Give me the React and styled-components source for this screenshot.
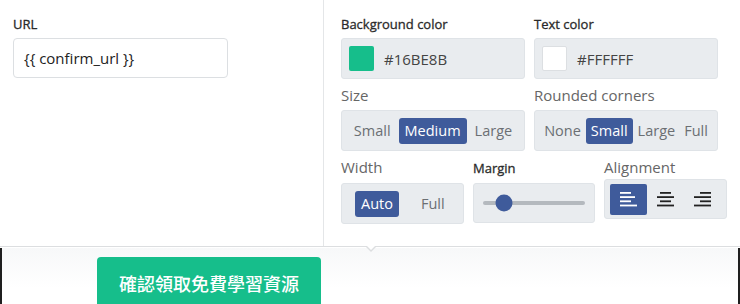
import styled, { createGlobalStyle } from 'styled-components';

const GlobalStyle = createGlobalStyle`
  html, body {
    margin: 0;
    padding: 0;
    background: #fff;
  }
  body {
    font-family: 'Open Sans', 'Noto Sans', 'Noto Sans CJK TC', sans-serif;
    color: #333;
  }
`;

const Page = styled.div`
  width: 740px;
  height: 304px;
  overflow: hidden;
  display: flex;
  flex-direction: column;
`;

const Editor = styled.div`
  display: flex;
  height: 246px;
  flex-shrink: 0;
`;

const LeftPane = styled.div`
  width: 324px;
  border-right: 1px solid #e4e6e8;
  padding: 15px 13px 0;
  box-sizing: border-box;
`;

const RightPane = styled.div`
  flex: 1;
  padding: 15px 12px 0 17px;
  display: flex;
  flex-direction: column;
  gap: 6px;
`;

const Row = styled.div`
  display: grid;
  grid-template-columns: ${(p) => p.cols};
  column-gap: 9px;
`;

const Field = styled.div`
  display: flex;
  flex-direction: column;
`;

// semibold look: Open Sans 600 renders as bold here, so thicken the regular face a touch
const Label = styled.div`
  font-size: 13px;
  line-height: 18px;
  color: #2a2a2a;
  -webkit-text-stroke: 0.3px #2a2a2a;
  margin-top: ${(p) => p.top || 0}px;
  margin-bottom: ${(p) => p.gap || 5}px;
`;

const SoftLabel = styled.div`
  font-size: 15px;
  line-height: 20px;
  color: #666;
  margin-bottom: ${(p) => p.gap || 5}px;
`;

const TextInput = styled.div`
  width: 215px;
  height: 40px;
  box-sizing: border-box;
  border: 1px solid #dcdfe2;
  border-radius: 4px;
  padding: 0 10px;
  display: flex;
  align-items: center;
  font-size: 15px;
  color: #222;
  margin-top: 1px;
`;

const Box = styled.div`
  height: ${(p) => p.h || 41}px;
  box-sizing: border-box;
  background: #e9ecef;
  border: 1px solid #dfe3e7;
  border-radius: 3px;
  display: flex;
  align-items: center;
`;

const ColorBox = styled(Box)`
  padding: 0 7px;
  gap: 10px;
  font-size: 15px;
  color: #444;
`;

const Swatch = styled.span`
  width: 25px;
  height: 25px;
  border-radius: 2px;
  background: ${(p) => p.color};
  border: ${(p) => (p.light ? '1px solid #dcdfe2' : 'none')};
  box-sizing: border-box;
`;

const Segments = styled(Box)`
  justify-content: ${(p) => p.justify || 'center'};
  padding: 0 ${(p) => p.pad || 0}px;
  gap: ${(p) => p.gap || 2}px;
`;

const SegButton = styled.span`
  height: 26px;
  padding: 0 ${(p) => p.px || 6}px;
  border-radius: 3px;
  display: flex;
  align-items: center;
  font-size: 14.5px;
  color: ${(p) => (p.active ? '#fff' : '#6b6f73')};
  background: ${(p) => (p.active ? '#3f5b9b' : 'transparent')};
`;

const SliderBox = styled(Box)`
  position: relative;
  padding: 0 9px;
`;

const Track = styled.div`
  position: relative;
  flex: 1;
  height: 4px;
  border-radius: 2px;
  background: #b4b9be;
`;

const Thumb = styled.span`
  position: absolute;
  left: 21px;
  top: 50%;
  width: 17px;
  height: 17px;
  border-radius: 50%;
  background: #3f5b9b;
  transform: translate(-50%, -50%);
`;

const AlignBox = styled(Box)`
  padding: 0 5px;
`;

const AlignButton = styled.span`
  width: 37px;
  height: 31px;
  border-radius: 2px;
  display: flex;
  align-items: center;
  justify-content: center;
  background: ${(p) => (p.active ? '#3f5b9b' : 'transparent')};
  color: ${(p) => (p.active ? '#fff' : '#222')};
`;

const Preview = styled.div`
  position: relative;
  flex: 1;
  border-top: 1px solid #dcdee0;
`;

const Frame = styled.div`
  height: 100%;
  margin-top: 1px;
  border-left: 2px solid #1f1f1f;
  border-right: 2px solid #1f1f1f;
  background: linear-gradient(#f7f8f9, #fff 40px);
  padding: 9px 0 0 95px;
  box-sizing: border-box;
`;

const Caret = styled.span`
  position: absolute;
  left: 365px;
  top: -1px;
  width: 0;
  height: 0;
  border-left: 6px solid transparent;
  border-right: 6px solid transparent;
  border-top: 6px solid #dcdee0;
  &::after {
    content: '';
    position: absolute;
    left: -5px;
    top: -7px;
    border-left: 5px solid transparent;
    border-right: 5px solid transparent;
    border-top: 5px solid #fff;
  }
`;

const CtaButton = styled.div`
  display: inline-flex;
  align-items: center;
  justify-content: center;
  width: 224px;
  height: 52px;
  background: #16be8b;
  border-radius: 4px;
  color: #fff;
  font-size: 18px;
  font-weight: 500;
  font-family: 'Noto Sans CJK TC', 'Noto Sans', sans-serif;
`;

const alignLines = {
  left: [
    [0, 11],
    [0, 15],
    [0, 11],
    [0, 17],
  ],
  center: [
    [3, 11],
    [0, 17],
    [3, 11],
    [0, 17],
  ],
  right: [
    [6, 11],
    [0, 17],
    [6, 11],
    [0, 17],
  ],
};

function AlignIcon({ kind }) {
  return (
    <svg width="17" height="15" viewBox="0 0 17 15">
      {alignLines[kind].map(([x, w], i) => (
        <rect key={i} x={x} y={i * 4.2} width={w} height="1.8" fill="currentColor" />
      ))}
    </svg>
  );
}

export default function App() {
  return (
    <Page>
      <GlobalStyle />
      <Editor>
        <LeftPane>
          <Label>URL</Label>
          <TextInput>{'{{ confirm_url }}'}</TextInput>
        </LeftPane>
        <RightPane>
          <Row cols="184px 184px">
            <Field>
              <Label>Background color</Label>
              <ColorBox>
                <Swatch color="#16BE8B" />
                #16BE8B
              </ColorBox>
            </Field>
            <Field>
              <Label>Text color</Label>
              <ColorBox>
                <Swatch color="#fff" light />
                #FFFFFF
              </ColorBox>
            </Field>
          </Row>
          <Row cols="184px 184px">
            <Field>
              <SoftLabel>Size</SoftLabel>
              <Segments>
                <SegButton>Small</SegButton>
                <SegButton active px={6}>Medium</SegButton>
                <SegButton>Large</SegButton>
              </Segments>
            </Field>
            <Field>
              <SoftLabel>Rounded corners</SoftLabel>
              <Segments gap={1}>
                <SegButton px={4}>None</SegButton>
                <SegButton active px={5}>Small</SegButton>
                <SegButton px={4}>Large</SegButton>
                <SegButton px={4}>Full</SegButton>
              </Segments>
            </Field>
          </Row>
          <Row cols="123px 122px 123px">
            <Field>
              <SoftLabel gap={6}>Width</SoftLabel>
              <Segments justify="flex-start" pad={13} gap={14}>
                <SegButton active px={6}>Auto</SegButton>
                <SegButton px={8}>Full</SegButton>
              </Segments>
            </Field>
            <Field>
              <Label gap={6} top={2}>Margin</Label>
              <SliderBox h={40}>
                <Track>
                  <Thumb />
                </Track>
              </SliderBox>
            </Field>
            <Field>
              <SoftLabel gap={2}>Alignment</SoftLabel>
              <AlignBox h={40}>
                <AlignButton active>
                  <AlignIcon kind="left" />
                </AlignButton>
                <AlignButton>
                  <AlignIcon kind="center" />
                </AlignButton>
                <AlignButton>
                  <AlignIcon kind="right" />
                </AlignButton>
              </AlignBox>
            </Field>
          </Row>
        </RightPane>
      </Editor>
      <Preview>
        <Caret />
        <Frame>
          <CtaButton>確認領取免費學習資源</CtaButton>
        </Frame>
      </Preview>
    </Page>
  );
}
